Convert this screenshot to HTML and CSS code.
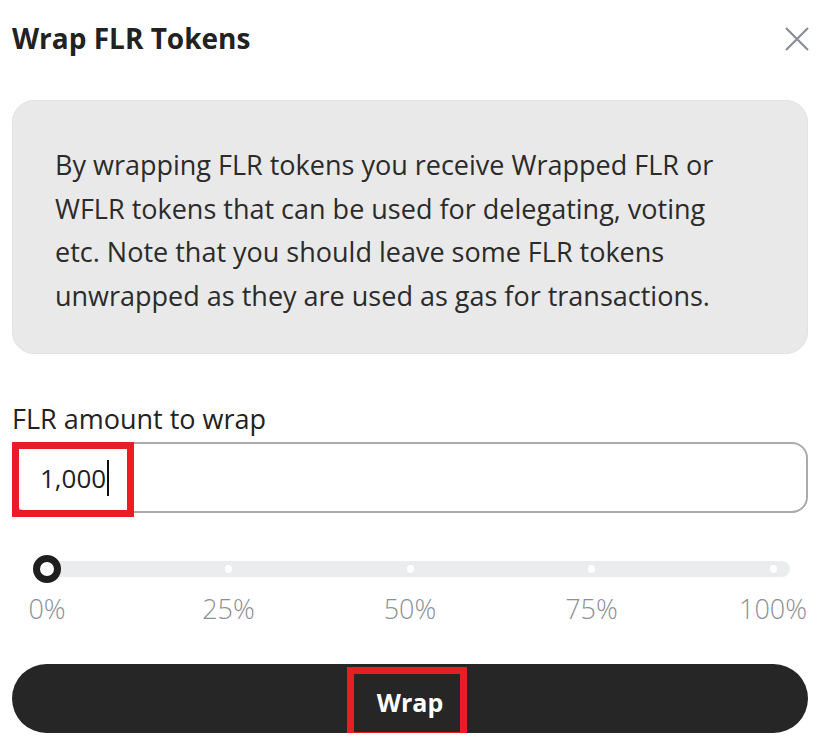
FILE: index.html
```html
<!DOCTYPE html>
<html lang="en">
<head>
<meta charset="utf-8">
<title>Wrap FLR Tokens</title>
<link rel="stylesheet" href="styles.css">
</head>
<body>
<div class="modal">
  <header class="modal-header">
    <h1 class="modal-title">Wrap FLR Tokens</h1>
    <button class="close-btn" aria-label="Close">
      <svg width="24" height="24" viewBox="0 0 24 24"><path d="M1 1 L23 23 M23 1 L1 23" stroke="#8a8d92" stroke-width="2.2" fill="none"/></svg>
    </button>
  </header>

  <div class="info-box">
    <p>By wrapping FLR tokens you receive Wrapped FLR or WFLR tokens that can be used for delegating, voting etc. Note that you should leave some FLR tokens unwrapped as they are used as gas for transactions.</p>
  </div>

  <label class="field-label">FLR amount to wrap</label>
  <div class="input-wrap">
    <div class="amount-input"><span class="amount-text">1,000</span><span class="caret"></span></div>
    <div class="mark mark-input"></div>
  </div>

  <div class="slider">
    <div class="track">
      <div class="stops">
        <span class="stop"><span class="knob"></span></span>
        <span class="stop"><span class="dot"></span></span>
        <span class="stop"><span class="dot"></span></span>
        <span class="stop"><span class="dot"></span></span>
        <span class="stop"><span class="dot"></span></span>
      </div>
    </div>
    <div class="ticks">
      <span class="tick"><span>0%</span></span>
      <span class="tick"><span>25%</span></span>
      <span class="tick"><span>50%</span></span>
      <span class="tick"><span>75%</span></span>
      <span class="tick"><span>100%</span></span>
    </div>
  </div>

  <div class="btn-wrap">
    <button class="wrap-btn">Wrap</button>
    <div class="mark mark-btn"></div>
  </div>
</div>
</body>
</html>
```
FILE: styles.css
```css
html, body {
  margin: 0;
  padding: 0;
  background: #ffffff;
}
body {
  font-family: "Open Sans", "Noto Sans", sans-serif;
  color: #222222;
}
.modal {
  width: 796px;
  padding: 0 23px 0 12px;
  display: flex;
  flex-direction: column;
}
.modal-header {
  display: flex;
  align-items: center;
  justify-content: space-between;
  padding-top: 20px;
  height: 36px;
}
.modal-title {
  margin: 0;
  font-size: 28px;
  line-height: 36px;
  font-weight: 700;
  color: #222222;
}
.close-btn {
  border: 0;
  background: none;
  padding: 0;
  width: 24px;
  height: 24px;
  margin-right: -1px;
  margin-top: 1px;
  display: flex;
}
.info-box {
  margin-top: 44px;
  background: #e9e9e9;
  border: 1px solid #e2e2e2;
  border-radius: 22px;
  padding: 42px 40px 36px 42px;
}
.info-box p {
  margin: 0;
  max-width: 690px;
  font-size: 27px;
  line-height: 43.5px;
  color: #2b2b2b;
  font-weight: 500;
}
.field-label {
  margin-top: 48px;
  font-size: 27px;
  line-height: 34px;
  font-weight: 500;
  color: #222222;
}
.input-wrap {
  position: relative;
  margin-top: 6px;
}
.amount-input {
  height: 67px;
  border: 2px solid #ababab;
  border-radius: 16px;
  padding-left: 26px;
  display: flex;
  align-items: center;
  font-size: 26px;
  color: #1e1e1e;
}
.amount-text {
  line-height: 34px;
}
.caret {
  width: 2px;
  height: 36px;
  background: #111111;
  margin-left: 1px;
}
.mark {
  position: absolute;
  border: 7px solid #e81d25;
  box-sizing: border-box;
  pointer-events: none;
}
.mark-input {
  left: 0;
  top: 0;
  width: 122px;
  height: 75px;
}
.slider {
  margin-top: 48px;
  display: flex;
  flex-direction: column;
}
.track {
  margin: 0 18px 0 23px;
  height: 16px;
  background: #ebecee;
  border-radius: 8px;
  padding: 0 17px 0 12px;
}
.stops {
  height: 16px;
  display: flex;
  justify-content: space-between;
  align-items: center;
}
.stop {
  width: 0;
  height: 16px;
  display: flex;
  justify-content: center;
  align-items: center;
}
.knob {
  flex: none;
  width: 28px;
  height: 28px;
  box-sizing: border-box;
  border: 7px solid #1f1f1f;
  border-radius: 50%;
  background: #ffffff;
}
.dot {
  flex: none;
  width: 7px;
  height: 8px;
  border-radius: 50%;
  background: #ffffff;
}
.ticks {
  margin: 17px 35px 0 35px;
  display: flex;
  justify-content: space-between;
}
.tick {
  width: 0;
  display: flex;
  justify-content: center;
  font-size: 27px;
  line-height: 30px;
  color: #8c9097;
  font-weight: 300;
  white-space: nowrap;
}
.btn-wrap {
  position: relative;
  margin-top: 40px;
}
.wrap-btn {
  width: 100%;
  height: 69px;
  border: 0;
  border-radius: 35px;
  background: #262626;
  color: #ffffff;
  font-family: "Open Sans", "Noto Sans", sans-serif;
  font-size: 25px;
  font-weight: 700;
  padding: 0;
  padding-top: 6px;
  display: flex;
  align-items: center;
  justify-content: center;
}
.mark-btn {
  left: 335px;
  top: 3px;
  width: 120px;
  height: 72px;
}
```
